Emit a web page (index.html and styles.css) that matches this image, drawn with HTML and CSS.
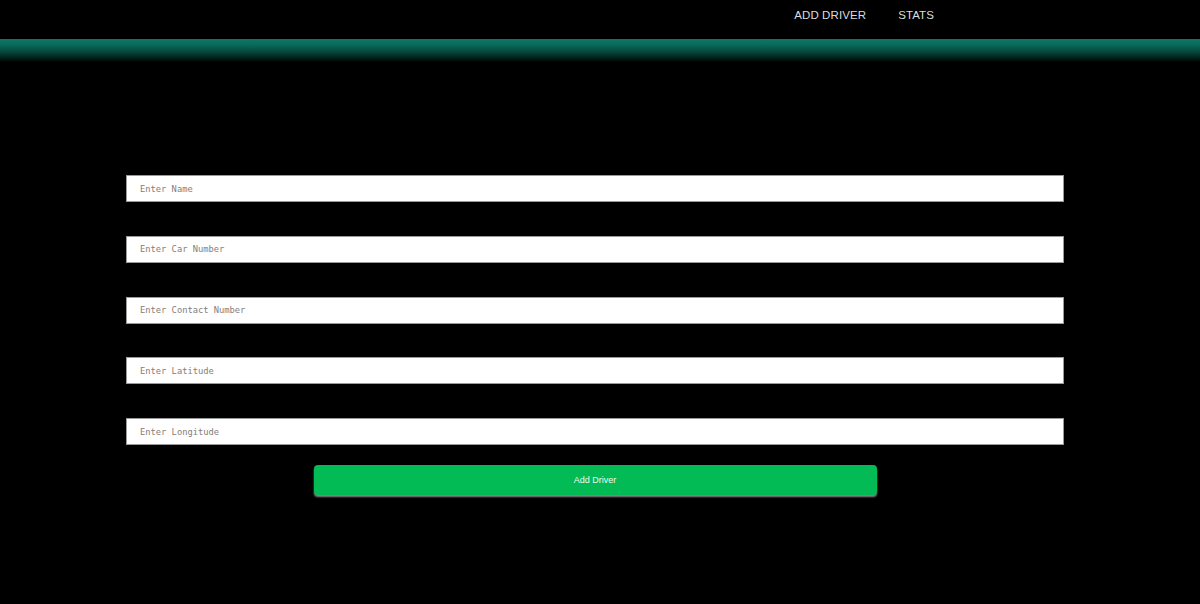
FILE: index.html
```html
<!DOCTYPE html>
<html>
<head>
<meta charset="utf-8">
<link rel="stylesheet" href="styles.css">
</head>
<body>
<header class="navbar">
  <nav class="nav-links">
    <a class="nav-link" href="#">ADD DRIVER</a>
    <a class="nav-link" href="#">STATS</a>
  </nav>
</header>
<div class="glow"></div>
<main class="page">
  <form class="driver-form">
    <input class="field" type="text" placeholder="Enter Name">
    <input class="field" type="text" placeholder="Enter Car Number">
    <input class="field" type="text" placeholder="Enter Contact Number">
    <input class="field" type="text" placeholder="Enter Latitude">
    <input class="field" type="text" placeholder="Enter Longitude">
    <button class="submit" type="button">Add Driver</button>
  </form>
</main>
</body>
</html>
```
FILE: styles.css
```css
html, body {
  margin: 0;
  padding: 0;
  background: #000;
  height: 100%;
}
body {
  font-family: "Liberation Sans", Arial, sans-serif;
}
.navbar {
  height: 39px;
  background: #000;
  display: flex;
  justify-content: flex-end;
  align-items: center;
  padding-right: 266px;
  box-sizing: border-box;
}
.nav-links {
  display: flex;
  gap: 32px;
  margin-top: -10px;
}
.nav-link {
  color: #dcdcdc;
  text-decoration: none;
  font-family: "Liberation Sans", Arial, sans-serif;
  font-size: 11.5px;
  letter-spacing: 0.1px;
}
.glow {
  height: 23px;
  background: linear-gradient(to bottom, #0b7766 0%, #0a6a5a 25%, #064236 60%, #011410 90%, #000 100%);
}
.page {
  padding-top: 113px;
}
.driver-form {
  width: 938px;
  margin-left: 126px;
  display: flex;
  flex-direction: column;
  align-items: center;
}
.field {
  width: 100%;
  height: 27px;
  box-sizing: border-box;
  margin: 0 0 33.75px 0;
  padding: 0 13px;
  border: 1px solid #9a9a9a;
  background: #fff;
  font-family: "DejaVu Sans Mono", monospace;
  font-size: 8.75px;
  outline: none;
}
.field:last-of-type {
  margin-bottom: 20px;
}
.field::placeholder {
  color: #857d78;
}
.submit {
  width: 563px;
  height: 30px;
  border: none;
  border-radius: 4px;
  background: #02bb55;
  color: #eefaf2;
  font-family: "Liberation Sans", Arial, sans-serif;
  font-size: 9px;
  box-shadow: 0 2px 2px #8a8a8a;
  cursor: pointer;
}
```
